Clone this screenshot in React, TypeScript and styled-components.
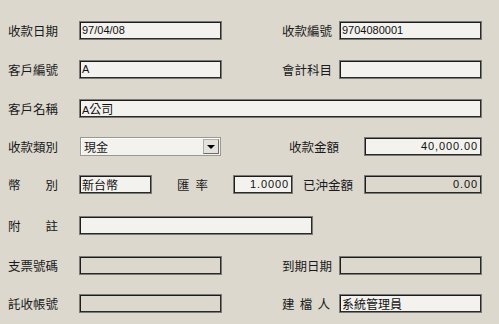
import React from 'react'
import styled, { createGlobalStyle } from 'styled-components'

const GlobalStyle = createGlobalStyle`
  html, body {
    margin: 0;
    padding: 0;
    background: #dcd8ce;
  }
  body {
    font-family: 'Noto Sans CJK TC', 'Liberation Sans', sans-serif;
    color: #1a1a1a;
  }
`

const Form = styled.div`
  width: 499px;
  height: 324px;
  box-sizing: border-box;
  padding: 21px 0 0 8px;
  display: flex;
  flex-direction: column;
  overflow: hidden;
`

const Row = styled.div<{ $top?: number }>`
  display: flex;
  align-items: center;
  height: 19px;
  margin-top: ${({ $top }) => $top ?? 0}px;
`

const Label = styled.div<{ $w?: number; $spread?: boolean; $ml?: number }>`
  width: ${({ $w }) => $w ?? 50}px;
  margin-left: ${({ $ml }) => $ml ?? 0}px;
  font-size: 12.5px;
  line-height: 19px;
  white-space: nowrap;
  display: flex;
  justify-content: ${({ $spread }) => ($spread ? 'space-between' : 'flex-start')};
  flex-shrink: 0;
`

const Field = styled.div<{ $w: number; $ml?: number; $disabled?: boolean; $right?: boolean }>`
  box-sizing: border-box;
  width: ${({ $w }) => $w}px;
  height: 19px;
  margin-left: ${({ $ml }) => $ml ?? 0}px;
  flex-shrink: 0;
  border: 1px solid #7a7a76;
  box-shadow: inset 1px 1px 0 #1c1c1c, inset -1px -1px 0 #2a2a2a;
  background: ${({ $disabled }) => ($disabled ? '#dcd8ce' : '#f3f2ee')};
  padding: 0 3px 0 2px;
  font-family: 'Liberation Sans', 'Noto Sans CJK TC', sans-serif;
  font-size: 11px;
  line-height: 17px;
  color: #111;
  white-space: nowrap;
  overflow: hidden;
  text-align: ${({ $right }) => ($right ? 'right' : 'left')};
`

const Cjk = styled.span`
  font-family: 'Noto Sans CJK TC', sans-serif;
  font-size: 12px;
`

const Num = styled.span`
  letter-spacing: 0.9px;
`

const Combo = styled.div`
  box-sizing: border-box;
  width: 141px;
  height: 19px;
  margin-left: 22px;
  flex-shrink: 0;
  display: flex;
  align-items: center;
  border: 1px solid #9a9892;
  box-shadow: inset 1px 1px 0 #ffffff;
  background: #f3f2ee;
  padding: 0 1px 0 3px;
`

const ComboText = styled.div`
  flex: 1;
  font-size: 12px;
  line-height: 17px;
`

const ComboButton = styled.div`
  box-sizing: border-box;
  width: 16px;
  height: 15px;
  display: flex;
  align-items: center;
  justify-content: center;
  background: #e4e2dc;
  border: 1px solid #b0aea8;
  border-right-color: #6e6c68;
  border-bottom-color: #6e6c68;
`

const Arrow = styled.div`
  width: 0;
  height: 0;
  border-left: 4px solid transparent;
  border-right: 4px solid transparent;
  border-top: 4px solid #000;
`

const Spread = ({ text }: { text: string }) => (
  <>
    {text.split('').map((c, i) => (
      <span key={i}>{c}</span>
    ))}
  </>
)

export default function App() {
  return (
    <>
      <GlobalStyle />
      <Form>
        <Row>
          <Label>收款日期</Label>
          <Field $w={143} $ml={21}>97/04/08</Field>
          <Label $ml={60} $w={48}>收款編號</Label>
          <Field $w={143} $ml={9}>9704080001</Field>
        </Row>

        <Row $top={20}>
          <Label>客戶編號</Label>
          <Field $w={143} $ml={21}>A</Field>
          <Label $ml={60} $w={48}>會計科目</Label>
          <Field $w={143} $ml={9} />
        </Row>

        <Row $top={20}>
          <Label>客戶名稱</Label>
          <Field $w={403} $ml={21}>
            A<Cjk>公司</Cjk>
          </Field>
        </Row>

        <Row $top={19}>
          <Label>收款類別</Label>
          <Combo>
            <ComboText>現金</ComboText>
            <ComboButton>
              <Arrow />
            </ComboButton>
          </Combo>
          <Label $ml={68} $w={50}>收款金額</Label>
          <Field $w={118} $ml={25} $right>
            <Num>40,000.00</Num>
          </Field>
        </Row>

        <Row $top={19}>
          <Label $spread>
            <Spread text="幣別" />
          </Label>
          <Field $w={73} $ml={21}>
            <Cjk>新台幣</Cjk>
          </Field>
          <Label $ml={25} $w={31} $spread>
            <Spread text="匯率" />
          </Label>
          <Field $w={60} $ml={25} $right>
            <Num>1.0000</Num>
          </Field>
          <Label $ml={10} $w={50}>已沖金額</Label>
          <Field $w={118} $ml={11} $right $disabled>
            <Num>0.00</Num>
          </Field>
        </Row>

        <Row $top={22}>
          <Label $spread>
            <Spread text="附註" />
          </Label>
          <Field $w={234} $ml={21} />
        </Row>

        <Row $top={21}>
          <Label>支票號碼</Label>
          <Field $w={143} $ml={21} $disabled />
          <Label $ml={60} $w={48}>到期日期</Label>
          <Field $w={143} $ml={9} $disabled />
        </Row>

        <Row $top={19}>
          <Label>託收帳號</Label>
          <Field $w={143} $ml={21} $disabled />
          <Label $ml={60} $w={48} $spread>
            <Spread text="建檔人" />
          </Label>
          <Field $w={143} $ml={9}>
            <Cjk>系統管理員</Cjk>
          </Field>
        </Row>
      </Form>
    </>
  )
}
